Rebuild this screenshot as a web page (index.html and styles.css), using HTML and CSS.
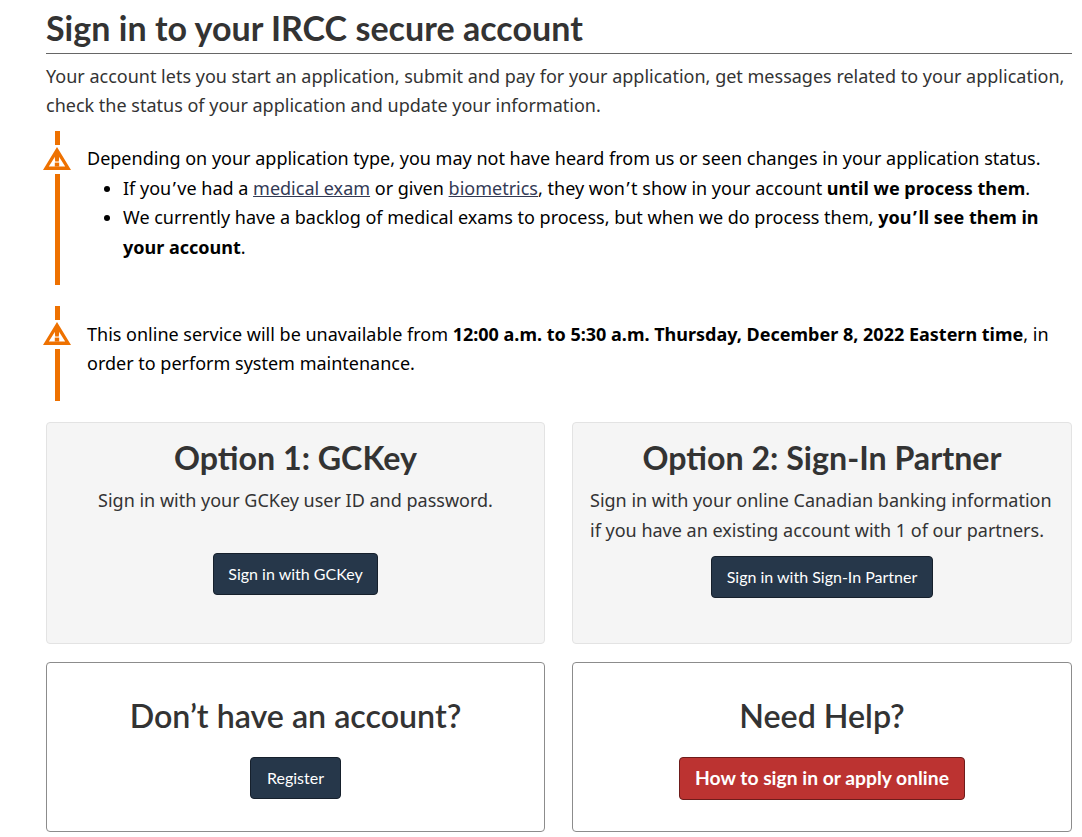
FILE: index.html
```html
<!DOCTYPE html>
<html lang="en">
<head>
<meta charset="utf-8">
<title>Sign in to your IRCC secure account</title>
<link rel="stylesheet" href="styles.css">
</head>
<body>
<main class="page">
  <h1 class="title">Sign in to your IRCC secure account</h1>
  <p class="intro">Your account lets you start an application, submit and pay for your application, get messages related to your application, check the status of your application and update your information.</p>

  <section class="alert alert-first">
    <svg class="alert-icon" viewBox="0 0 28 29" aria-hidden="true"><path class="tri" fill-rule="evenodd" d="M14 2 L28 25 L0 25 Z M14 8.5 L5.8 21.6 L22.2 21.6 Z"/><path class="tri" d="M11.4 8h5.2l-.8 8.6h-3.6z"/><rect class="tri" x="11.8" y="17.6" width="4.4" height="4"/></svg>
    <p class="alert-text">Depending on your application type, you may not have heard from us or seen changes in your application status.</p>
    <ul class="alert-list">
      <li>If you<span class="apos">’</span>ve had a <a href="#">medical exam</a> or given <a href="#">biometrics</a>, they won<span class="apos">’</span>t show in your account <strong>until we process them</strong>.</li>
      <li>We currently have a backlog of medical exams to process, but when we do process them, <strong>you<span class="apos">’</span>ll see them in your account</strong>.</li>
    </ul>
  </section>

  <section class="alert alert-second">
    <svg class="alert-icon" viewBox="0 0 28 29" aria-hidden="true"><path class="tri" fill-rule="evenodd" d="M14 2 L28 25 L0 25 Z M14 8.5 L5.8 21.6 L22.2 21.6 Z"/><path class="tri" d="M11.4 8h5.2l-.8 8.6h-3.6z"/><rect class="tri" x="11.8" y="17.6" width="4.4" height="4"/></svg>
    <p class="alert-text">This online service will be unavailable from <strong>12:00 a.m. to 5:30 a.m. Thursday, December 8, 2022 Eastern time</strong>, in order to perform system maintenance.</p>
  </section>

  <div class="grid">
    <section class="panel panel-grey">
      <h2>Option 1: GCKey</h2>
      <p class="panel-text">Sign in with your GCKey user ID and password.</p>
      <a class="btn btn-dark btn-gckey" href="#">Sign in with GCKey</a>
    </section>
    <section class="panel panel-grey">
      <h2>Option 2: Sign-In Partner</h2>
      <p class="panel-text left">Sign in with your online Canadian banking information if you have an existing account with 1 of our partners.</p>
      <a class="btn btn-dark" href="#">Sign in with Sign-In Partner</a>
    </section>
    <section class="panel panel-white">
      <h2>Don’t have an account?</h2>
      <a class="btn btn-dark btn-register" href="#">Register</a>
    </section>
    <section class="panel panel-white">
      <h2>Need Help?</h2>
      <a class="btn btn-red" href="#">How to sign in or apply online</a>
    </section>
  </div>
</main>
</body>
</html>
```
FILE: styles.css
```css
* { box-sizing: border-box; }
html, body { margin: 0; padding: 0; background: #fff; }
body {
  font-family: "Noto Sans", sans-serif;
  font-size: 18px;
  line-height: 29.7px;
  color: #333;
  overflow: hidden;
  height: 837px;
}
.page { padding: 7px 10px 0 46px; }
.title {
  font-family: Lato, sans-serif;
  font-weight: 700;
  font-size: 34px;
  line-height: 41px;
  letter-spacing: 0.03px;
  color: #333;
  margin: 0;
  padding-bottom: 5px;
  border-bottom: 1px solid #666;
}
.intro { margin: 7.55px 0 0; }
.alert {
  position: relative;
  margin-left: 9px;
  padding-left: 27px;
  border-left: 5px solid #ee7100;
  color: #000;
}
.alert-first { margin-top: 10.45px; height: 154px; padding-top: 12.5px; }
.alert-second { margin-top: 21px; height: 95px; padding-top: 13.2px; }
.alert-text { margin: 0; }
.alert-list { margin: 0; padding: 0 0 0 36px; }
.alert a { color: #333a55; }
.apos { margin: 0 1.5px; }
.alert-icon {
  position: absolute;
  left: -17px;
  top: 14px;
  width: 28px;
  height: 29px;
  background: #fff;
}
.tri { fill: #ee7100; }
.grid {
  display: grid;
  grid-template-columns: 499px 500px;
  grid-template-rows: 222px 170px;
  column-gap: 27px;
  row-gap: 18px;
  margin-top: 21px;
}
.panel {
  border-radius: 4px;
  text-align: center;
  padding: 14px 17px 0;
}
.panel-grey { background: #f5f5f5; border: 1px solid #e3e3e3; }
.panel-white { background: #fff; border: 1px solid #8c8c8c; padding-top: 32px; }
.panel h2 {
  font-family: Lato, sans-serif;
  font-weight: 700;
  font-size: 32.2px;
  line-height: 41px;
  color: #333;
  margin: 0 0 8px;
}
.panel-white h2 { margin-bottom: 21px; font-weight: 600; }
.panel-text { margin: 0 0 10px; }
.panel-text.left { text-align: left; }
.btn {
  display: inline-block;
  font-family: Lato, sans-serif;
  font-size: 16px;
  line-height: 22px;
  padding: 9px 15px;
  border-radius: 4px;
  text-decoration: none;
  color: #fff;
}
.btn-gckey { margin-top: 27px; padding: 9px 14px; }
.btn-register { padding: 9px 15.5px; }
.btn-dark { background: #26374a; border: 1px solid #16202c; }
.btn-red {
  background: #bc3331;
  border: 1px solid #6e1c1b;
  font-weight: 700;
  font-size: 19.3px;
  line-height: 23px;
  padding: 8px 15px 10px;
}
```
